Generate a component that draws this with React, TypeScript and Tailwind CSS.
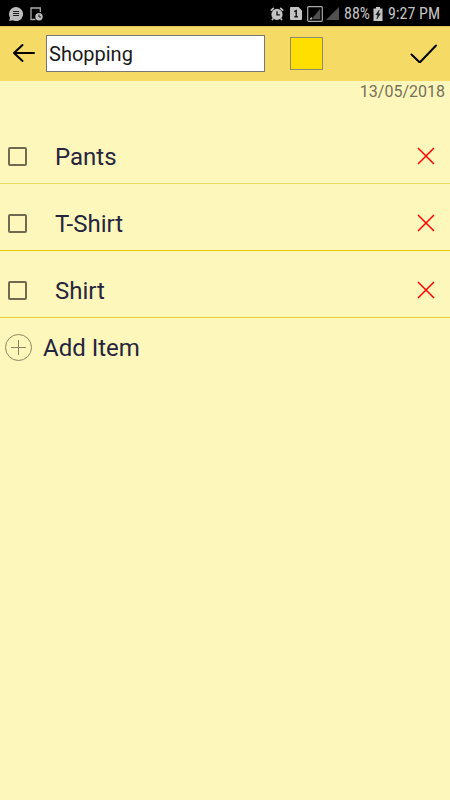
import { useState } from "react";

type Item = { id: number; text: string; line: string };

const initialItems: Item[] = [
  { id: 1, text: "Pants", line: "border-[#ecd964]" },
  { id: 2, text: "T-Shirt", line: "border-[#e5c800]" },
  { id: 3, text: "Shirt", line: "border-[#e8cf35]" },
];

function StatusBar() {
  return (
    <div className="flex h-[26px] items-center justify-between bg-black pl-[9px] pr-[10px] text-[#c4c4c4]">
      <div className="flex items-center gap-[7px] pt-[2px]">
        <svg width="14" height="14" viewBox="0 0 14 14" aria-hidden="true">
          <path d="M7 0a7 7 0 1 1-3.2 13.2L.3 14l.6-3.6A7 7 0 0 1 7 0z" fill="#bdbdbd" />
          <path d="M4 4.5h6M4 6.500h6M4 8.500h6" stroke="#222" strokeWidth="1" />
        </svg>
        <svg width="13" height="14" viewBox="0 0 13 14" fill="none" aria-hidden="true">
          <path d="M10.3 5V1H1v11.5h4.5" stroke="#aaa" strokeWidth="1.3" />
          <circle cx="9" cy="9.7" r="3.7" fill="#bdbdbd" />
          <path d="M9 7.5v2.4h2" stroke="#111" strokeWidth="1" />
        </svg>
      </div>
      <div className="flex items-center pt-px">
        <svg className="mr-[6px]" width="14" height="14" viewBox="0 0 14 14" fill="none" aria-hidden="true">
          <circle cx="7" cy="7.4" r="5.6" fill="#c4c4c4" />
          <path d="M.8 3.6 3.8 1M13.2 3.6 10.2 1M3.2 11.4 2 13M10.8 11.4 12 13" stroke="#c4c4c4" strokeWidth="1.7" />
          <path d="M7 4.2v3.6h2.8" stroke="#111" strokeWidth="1.3" />
        </svg>
        <svg className="mr-[5px]" width="12" height="13" viewBox="0 0 12 13" aria-hidden="true">
          <path d="M1 0h7.5L12 3.5V12a1 1 0 0 1-1 1H1a1 1 0 0 1-1-1V1a1 1 0 0 1 1-1z" fill="#c4c4c4" />
          <path d="M4.2 4.6 6.2 3.6V10M4.4 9.8h3.4" stroke="#111" strokeWidth="1.4" fill="none" />
        </svg>
        <svg className="mr-[3px]" width="16" height="16" viewBox="0 0 16 16" aria-hidden="true">
          <rect x=".7" y=".7" width="14.6" height="14.6" rx="1" fill="none" stroke="#aaa" strokeWidth="1.2" />
          <path d="M13.2 2.8v10.4H4.500z" fill="#505050" />
          <path d="M4.500 11.5v1.700H3z" fill="#ddd" stroke="#ddd" strokeWidth=".5" />
        </svg>
        <svg className="mr-[5px]" width="13" height="13" viewBox="0 0 13 13" aria-hidden="true">
          <path d="M13 0v13H0z" fill="#505050" />
        </svg>
        <span className="font-['Roboto_Condensed',Roboto,sans-serif] text-[16px] leading-none">88%</span>
        <svg className="mr-[5px] ml-[3px]" width="10" height="14" viewBox="0 0 10 14" aria-hidden="true">
          <path d="M3 0h4v1.5h2.5V14H.5V1.5H3z" fill="#c4c4c4" />
          <path d="M6.3 3 2.8 7.7h2.1L3.8 12 7.4 6.8H5.2z" fill="#111" stroke="#111" strokeWidth=".5" />
        </svg>
        <span className="font-['Roboto_Condensed',Roboto,sans-serif] text-[16px] leading-none">9:27 PM</span>
      </div>
    </div>
  );
}

export default function App() {
  const [title, setTitle] = useState("Shopping");
  const [items, setItems] = useState(initialItems);

  return (
    <div className="min-h-screen bg-[#fef7bb] font-[Roboto,sans-serif] text-[#252540]">
      <StatusBar />
      <header className="flex h-[55px] items-center border-t border-[#dfc45a] bg-[#f5da66] px-3 pb-[2px]">
        <button type="button" aria-label="Back" className="mr-[11px] shrink-0">
          <svg width="23" height="20" viewBox="0 0 23 20" fill="none" stroke="#000" strokeWidth="2" strokeLinecap="round" strokeLinejoin="round" aria-hidden="true">
            <path d="M22 10H2M10.5 2 2 10l8.500 8" />
          </svg>
        </button>
        <input
          aria-label="List title"
          value={title}
          onChange={(e) => setTitle(e.target.value)}
          className="h-[37px] w-[219px] min-w-0 border border-[#777] bg-white px-[2px] pt-[2px] text-[20px] text-[#1a1a1a] outline-none"
        />
        <button type="button" aria-label="Note colour" className="ml-[25px] size-[33px] shrink-0 border border-[#8c8c70] bg-[#ffdf00]" />
        <button type="button" aria-label="Save" className="ml-auto shrink-0">
          <svg width="28" height="20" viewBox="0 0 28 20" fill="none" stroke="#000" strokeWidth="2" strokeLinecap="round" aria-hidden="true">
            <path d="m1.500 11.500 8.300 8L26 2.500" />
          </svg>
        </button>
      </header>
      <p className="h-9 pt-[1px] pr-[5px] text-right text-[16px] leading-5 text-[#757058]">13/05/2018</p>
      <ul>
        {items.map((item) => (
          <li key={item.id} className={`flex h-[67px] items-center border-b pt-3 pr-[15px] pl-2 ${item.line}`}>
            <input
              id={`item-${item.id}`}
              type="checkbox"
              className="size-[19px] shrink-0 appearance-none rounded-xs border-2 border-[#6f6a50] checked:bg-[#6f6a50]"
            />
            <label htmlFor={`item-${item.id}`} className="ml-7 flex-1 pt-[2px] text-[24px] leading-8">
              {item.text}
            </label>
            <button type="button" aria-label={`Delete ${item.text}`} onClick={() => setItems(items.filter((i) => i.id !== item.id))}>
              <svg width="18" height="18" viewBox="0 0 18 18" stroke="#f00" strokeWidth="1.500" aria-hidden="true">
                <path d="m1 1 16 16M17 1 1 17" />
              </svg>
            </button>
          </li>
        ))}
      </ul>
      <button type="button" className="flex h-[59px] w-full items-center gap-[11px] pl-[5px] text-[24px] leading-8">
        <svg width="27" height="27" viewBox="0 0 27 27" fill="none" stroke="#8a8560" strokeWidth="1" aria-hidden="true">
          <circle cx="13.500" cy="13.500" r="13" />
          <path d="M13.500 6v15M6 13.500h15" />
        </svg>
        Add Item
      </button>
    </div>
  );
}
